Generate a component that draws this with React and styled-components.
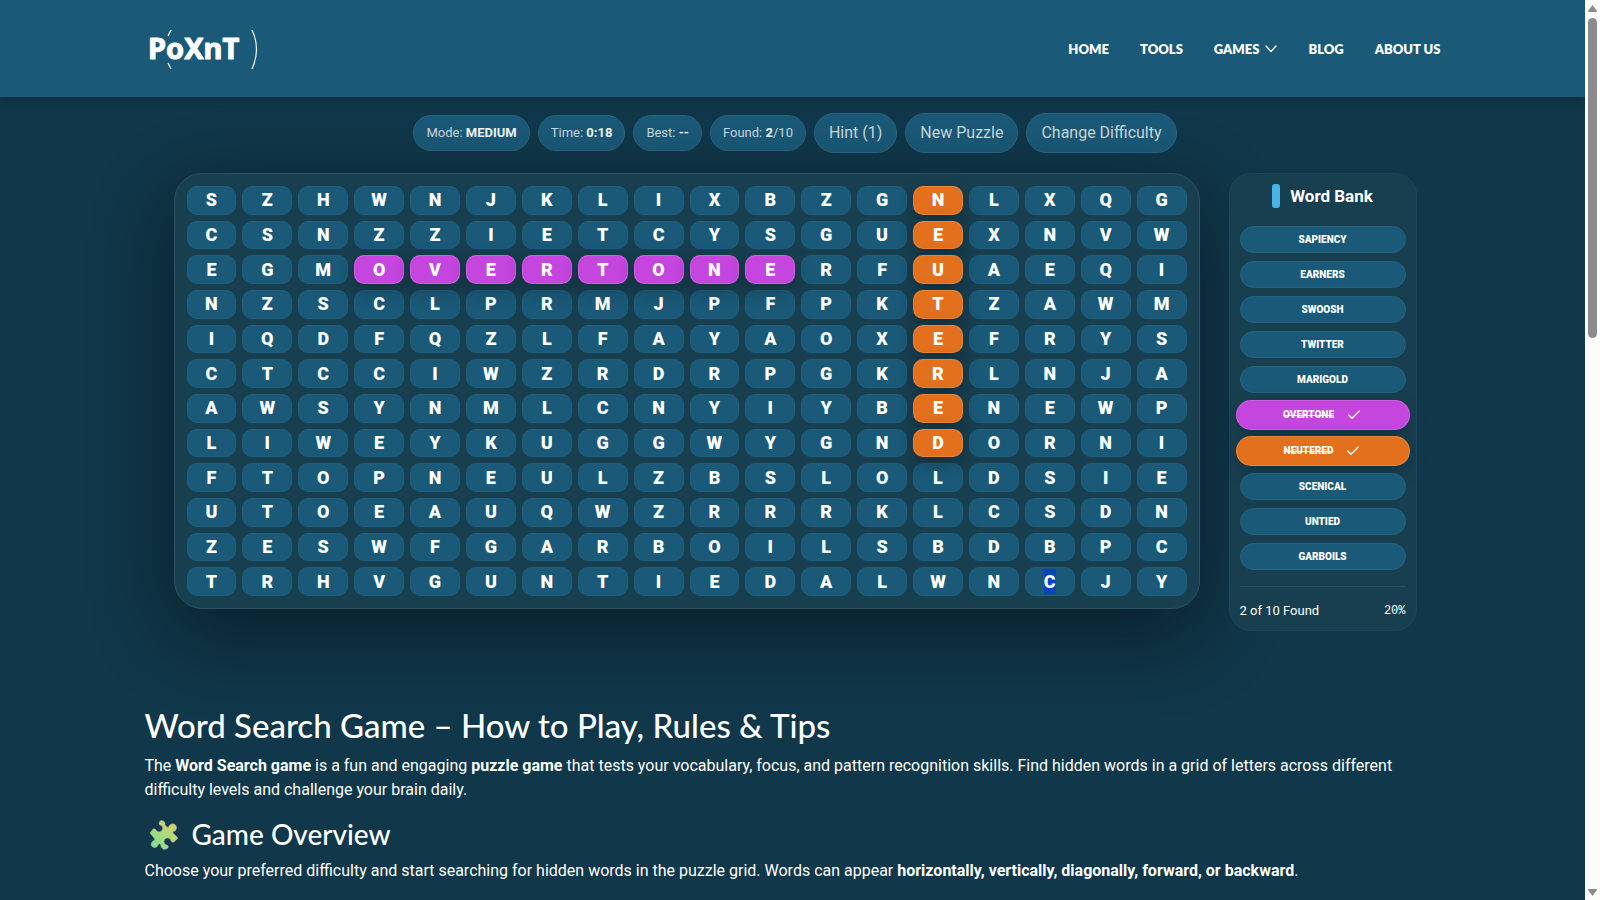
import React from 'react';
import styled, { createGlobalStyle } from 'styled-components';
import { Check } from 'lucide-react';

const GlobalStyle = createGlobalStyle`
  * {
    box-sizing: border-box;
  }

  body {
    margin: 0;
    background: #10374a;
    color: #ffffff;
    font-family: Roboto, 'Liberation Sans', sans-serif;
    font-size: 16px;
    line-height: 24px;
  }
`;

const Window = styled.div`
  display: flex;
  height: 100vh;
  overflow: hidden;
`;

const Page = styled.div`
  flex: 1;
  min-width: 0;
  overflow: hidden;
`;

const Scrollbar = styled.div`
  display: flex;
  flex-direction: column;
  align-items: center;
  justify-content: space-between;
  width: 15px;
  padding: 5px 3px 4px;
  background: #fcfcfc;
`;

const ScrollArrow = styled.svg`
  display: block;
  width: 9px;
  height: 7px;
  fill: #8b8b8b;
`;

const ScrollTrack = styled.div`
  flex: 1;
  width: 9px;
  padding: 6px 0;
`;

const ScrollThumb = styled.div`
  height: 37%;
  border-radius: 5px;
  background: #8b8b8b;
`;

const Container = styled.div`
  max-width: 1320px;
  margin: 0 auto;
  padding: 0 12px;
`;

const Header = styled.header`
  background: #1a5a78;
  box-shadow: 0 2px 12px rgba(0, 0, 0, 0.2);
`;

const HeaderInner = styled(Container)`
  display: flex;
  align-items: center;
  justify-content: space-between;
  height: 97px;
`;

const LogoLink = styled.a`
  display: block;
  color: white;
`;

const LogoArt = styled.svg`
  display: block;
  width: 116px;
  height: 48px;

  text {
    font-family: 'Noto Sans', sans-serif;
    font-size: 29px;
    font-weight: 700;
    fill: white;
    stroke: white;
    stroke-width: 1;
    stroke-linejoin: round;
  }

  path {
    fill: none;
    stroke: white;
    stroke-width: 1.2;
  }
`;

const Nav = styled.nav`
  display: flex;
  align-items: center;
  gap: 31px;
`;

const NavLink = styled.a`
  display: flex;
  align-items: center;
  gap: 6px;
  color: white;
  font-family: Lato, sans-serif;
  font-size: 13px;
  font-weight: 800;
  text-decoration: none;
`;

const ChevronArt = styled.svg`
  width: 12px;
  height: 8px;
  fill: none;
  stroke: currentColor;
  stroke-width: 1.3;
  stroke-linecap: round;
  stroke-linejoin: round;
`;

const Game = styled.section`
  padding: 16px 24px 0 29px;
`;

const Toolbar = styled.div`
  display: flex;
  flex-wrap: wrap;
  align-items: center;
  justify-content: center;
  gap: 8px;
`;

const Stat = styled.div`
  padding: 5px 12px;
  border: 1px solid #2a6783;
  border-radius: 18px;
  background: #1a5977;
  color: #c8d8df;
  font-size: 13px;

  strong {
    color: #f0f6f8;
  }
`;

const ToolButton = styled.button`
  padding: 7px 14px;
  border: 1px solid #2a6783;
  border-radius: 20px;
  background: #1a5977;
  color: #c8d8df;
  font: inherit;
  cursor: pointer;
`;

const PlayArea = styled.div`
  display: grid;
  grid-template-columns: minmax(0, 1fr) 188px;
  align-items: start;
  gap: 29px;
  margin-top: 20px;
`;

const Board = styled.div`
  display: grid;
  grid-template-columns: repeat(18, minmax(0, 1fr));
  grid-template-rows: repeat(12, minmax(0, 1fr));
  gap: 6px;
  height: 436px;
  padding: 12px;
  border: 1px solid #2f5263;
  border-radius: 28px;
  background: #183f50;
  box-shadow: 0 24px 80px rgba(0, 0, 0, 0.45);
`;

const Cell = styled.button`
  position: relative;
  z-index: ${props => (props.$color ? 1 : 0)};
  padding: 0 0 1px;
  border: 1px solid ${props => (props.$color ? 'rgba(255, 255, 255, 0.16)' : '#1f607f')};
  border-radius: 10px;
  background: ${props => props.$color || '#1a5977'};
  box-shadow: ${props => (props.$color ? '0 6px 18px rgba(0, 0, 0, 0.25)' : 'none')};
  color: white;
  font-family: inherit;
  font-size: 18px;
  font-weight: 900;
  line-height: 25px;
  cursor: pointer;
`;

const Highlight = styled.span`
  display: inline-block;
  background: #0046b8;
`;

const Bank = styled.aside`
  padding: 10px 10px 7px;
  border: 1px solid #1c4562;
  border-radius: 22px;
  background: #183f50;
`;

const BankTitle = styled.h2`
  display: flex;
  align-items: center;
  justify-content: center;
  gap: 10px;
  margin: 0 0 18px;
  font-size: 17px;
  font-weight: 700;
  line-height: 24px;

  &::before {
    content: '';
    width: 8px;
    height: 24px;
    border-radius: 3px;
    background: #48b3e6;
  }
`;

const WordList = styled.ul`
  display: flex;
  flex-direction: column;
  gap: 8px;
  margin: 0;
  padding: 0;
  list-style: none;
`;

const Word = styled.li`
  display: flex;
  align-items: center;
  justify-content: center;
  gap: 12px;
  height: ${props => (props.$color ? 30 : 27)}px;
  margin: ${props => (props.$color ? '-1px -4px' : '0')};
  border: 1px solid ${props => (props.$color ? 'rgba(255, 255, 255, 0.16)' : '#25647f')};
  border-radius: 15px;
  background: ${props => props.$color || '#1a5977'};
  box-shadow: ${props => (props.$color ? '0 6px 18px rgba(0, 0, 0, 0.2)' : 'none')};
  font-size: 10px;
  font-weight: 900;
`;

const BankFooter = styled.div`
  display: flex;
  align-items: center;
  justify-content: space-between;
  margin-top: 16px;
  padding-top: 12px;
  border-top: 1px solid #2a4c5c;
  font-size: 13px;
`;

const Percent = styled.span`
  font-family: 'Liberation Mono', monospace;
  font-size: 12px;
`;

const Article = styled.article`
  margin-top: 73px;

  p {
    margin: 0;
  }
`;

const Title = styled.h1`
  margin: 0 0 8px;
  font-family: Lato, sans-serif;
  font-size: 33px;
  font-weight: 500;
  line-height: 42px;
`;

const Subtitle = styled.h2`
  display: flex;
  align-items: center;
  gap: 11px;
  margin: 14px 0 7px;
  font-family: Lato, sans-serif;
  font-size: 28px;
  font-weight: 500;
  line-height: 36px;
`;

const PuzzleArt = styled.svg`
  width: 36px;
  height: 32px;
`;

const PURPLE = '#c545df';
const ORANGE = '#e2701d';

const rows = [
  'SZHWNJKLIXBZGNLXQG',
  'CSNZZIETCYSGUEXNVW',
  'EGMOVERTONERFUAEQI',
  'NZSCLPRMJPFPKTZAWM',
  'IQDFQZLFAYAOXEFRYS',
  'CTCCIWZRDRPGKRLNJA',
  'AWSYNMLCNYIYBENEWP',
  'LIWEYKUGGWYGNDORNI',
  'FTOPNEULZBSLOLDSIE',
  'UTOEAUQWZRRRKLCSDN',
  'ZESWFGARBOILSBDBPC',
  'TRHVGUNTIEDALWNCJY',
];

const words = [
  { text: 'SAPIENCY' },
  { text: 'EARNERS' },
  { text: 'SWOOSH' },
  { text: 'TWITTER' },
  { text: 'MARIGOLD' },
  { text: 'OVERTONE', color: PURPLE },
  { text: 'NEUTERED', color: ORANGE },
  { text: 'SCENICAL' },
  { text: 'UNTIED' },
  { text: 'GARBOILS' },
];

const getCellColor = (row, col) => {
  if (row === 2 && col >= 3 && col <= 10) {
    return PURPLE;
  }
  if (col === 13 && row <= 7) {
    return ORANGE;
  }
  return undefined;
};

const isSelected = (row, col) => row === 11 && col === 15;

const Logo = () => (
  <LogoLink href="#home" aria-label="PoXnT">
    <LogoArt viewBox="0 0 116 48">
      <text x="3" y="34">
        PoXnT
      </text>
      <path d="M26 5 L23 11 M23 38 L26 44" />
      <path d="M107 5 Q116 24 107 44" />
    </LogoArt>
  </LogoLink>
);

const Chevron = () => (
  <ChevronArt viewBox="0 0 12 8" aria-hidden="true">
    <path d="M1 1 L6 6.5 L11 1" />
  </ChevronArt>
);

const AppHeader = () => (
  <Header>
    <HeaderInner>
      <Logo />
      <Nav>
        <NavLink href="#home">HOME</NavLink>
        <NavLink href="#tools">TOOLS</NavLink>
        <NavLink href="#games">
          GAMES
          <Chevron />
        </NavLink>
        <NavLink href="#blog">BLOG</NavLink>
        <NavLink href="#about">ABOUT US</NavLink>
      </Nav>
    </HeaderInner>
  </Header>
);

const GameToolbar = () => (
  <Toolbar>
    <Stat>
      Mode: <strong>MEDIUM</strong>
    </Stat>
    <Stat>
      Time: <strong>0:18</strong>
    </Stat>
    <Stat>
      Best: <strong>--</strong>
    </Stat>
    <Stat>
      Found: <strong>2</strong>/10
    </Stat>
    <ToolButton type="button">Hint (1)</ToolButton>
    <ToolButton type="button">New Puzzle</ToolButton>
    <ToolButton type="button">Change Difficulty</ToolButton>
  </Toolbar>
);

const LetterBoard = () => (
  <Board>
    {rows.map((letters, row) =>
      letters.split('').map((letter, col) => (
        <Cell key={`${row}-${col}`} type="button" $color={getCellColor(row, col)}>
          {isSelected(row, col) ? <Highlight>{letter}</Highlight> : letter}
        </Cell>
      ))
    )}
  </Board>
);

const WordBank = () => (
  <Bank>
    <BankTitle>Word Bank</BankTitle>
    <WordList>
      {words.map(({ text, color }) => (
        <Word key={text} $color={color}>
          {color ? <s>{text}</s> : text}
          {color && <Check size={16} strokeWidth={2} />}
        </Word>
      ))}
    </WordList>
    <BankFooter>
      <span>2 of 10 Found</span>
      <Percent>20%</Percent>
    </BankFooter>
  </Bank>
);

const PuzzleIcon = () => (
  <PuzzleArt viewBox="0 0 36 32" aria-hidden="true">
    <defs>
      <linearGradient id="puzzle" x1="0" y1="1" x2="1" y2="0">
        <stop offset="0" stopColor="#6fe39a" />
        <stop offset="1" stopColor="#e6cf5c" />
      </linearGradient>
    </defs>
    <path
      d="M15 3 a3.5 3.5 0 0 1 5 4 l2 2 q2 1 2 -1 a4 4 0 1 1 6 5 q-3 0 -2 2 l5 5 l-4 4 q-2 1 -3 -1 a3.5 3.5 0 1 0 -4 4 q2 1 1 3 l-2 1 a3.5 3.5 0 0 1 -5 -3 q-1 -4 -3 -1 a3.5 3.5 0 1 1 -5 -4 q3 -1 1 -3 l-4 -5 l3 -4 q2 -1 3 1 a3.5 3.5 0 1 0 4 -5 q-2 -1 0 -4z"
      fill="url(#puzzle)"
      stroke="#b8a9b5"
      strokeWidth="0.5"
    />
  </PuzzleArt>
);

const HowToPlay = () => (
  <Article>
    <Title>Word Search Game – How to Play, Rules &amp; Tips</Title>
    <p>
      The <strong>Word Search game</strong> is a fun and engaging <strong>puzzle game</strong> that tests your
      vocabulary, focus, and pattern recognition skills. Find hidden words in a grid of letters across different
      difficulty levels and challenge your brain daily.
    </p>
    <Subtitle>
      <PuzzleIcon />
      Game Overview
    </Subtitle>
    <p>
      Choose your preferred difficulty and start searching for hidden words in the puzzle grid. Words can appear{' '}
      <strong>horizontally, vertically, diagonally, forward, or backward</strong>.
    </p>
  </Article>
);

const App = () => (
  <>
    <GlobalStyle />
    <Window>
      <Page>
        <AppHeader />
        <Container as="main">
          <Game>
            <GameToolbar />
            <PlayArea>
              <LetterBoard />
              <WordBank />
            </PlayArea>
          </Game>
          <HowToPlay />
        </Container>
      </Page>
      <Scrollbar aria-hidden="true">
        <ScrollArrow viewBox="0 0 9 7">
          <path d="M4.5 0 L9 6 Q9 7 8 7 H1 Q0 7 0 6z" />
        </ScrollArrow>
        <ScrollTrack>
          <ScrollThumb />
        </ScrollTrack>
        <ScrollArrow viewBox="0 0 9 7">
          <path d="M4.5 7 L9 1 Q9 0 8 0 H1 Q0 0 0 1z" />
        </ScrollArrow>
      </Scrollbar>
    </Window>
  </>
);

export default App;
